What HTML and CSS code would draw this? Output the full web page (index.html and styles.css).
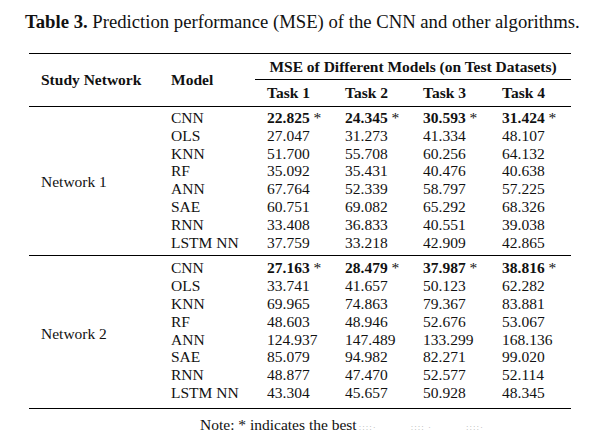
FILE: index.html
```html
<!DOCTYPE html>
<html>
<head>
<meta charset="utf-8">
<link rel="stylesheet" href="styles.css">
</head>
<body>
<div class="page">
  <p class="caption"><b>Table 3.</b> Prediction performance (MSE) of the CNN and other algorithms.</p>
  <table class="mse">
    <colgroup>
      <col class="c-net"><col class="c-model"><col class="c-task"><col class="c-task"><col class="c-task3"><col class="c-task4">
    </colgroup>
    <thead>
      <tr class="h1">
        <th rowspan="2" class="hl">Study Network</th>
        <th rowspan="2" class="hl">Model</th>
        <th colspan="4" class="span">MSE of Different Models (on Test Datasets)</th>
      </tr>
      <tr class="h2">
        <th>Task 1</th><th>Task 2</th><th>Task 3</th><th>Task 4</th>
      </tr>
    </thead>
    <tbody class="blk b1">
      <tr class="first"><td rowspan="8" class="net">Network 1</td><td>CNN</td><td><b>22.825</b> *</td><td><b>24.345</b> *</td><td><b>30.593</b> *</td><td><b>31.424</b> *</td></tr>
      <tr><td>OLS</td><td>27.047</td><td>31.273</td><td>41.334</td><td>48.107</td></tr>
      <tr><td>KNN</td><td>51.700</td><td>55.708</td><td>60.256</td><td>64.132</td></tr>
      <tr><td>RF</td><td>35.092</td><td>35.431</td><td>40.476</td><td>40.638</td></tr>
      <tr><td>ANN</td><td>67.764</td><td>52.339</td><td>58.797</td><td>57.225</td></tr>
      <tr><td>SAE</td><td>60.751</td><td>69.082</td><td>65.292</td><td>68.326</td></tr>
      <tr><td>RNN</td><td>33.408</td><td>36.833</td><td>40.551</td><td>39.038</td></tr>
      <tr class="last"><td>LSTM NN</td><td>37.759</td><td>33.218</td><td>42.909</td><td>42.865</td></tr>
    </tbody>
    <tbody class="blk b2">
      <tr class="first"><td rowspan="8" class="net">Network 2</td><td>CNN</td><td><b>27.163</b> *</td><td><b>28.479</b> *</td><td><b>37.987</b> *</td><td><b>38.816</b> *</td></tr>
      <tr><td>OLS</td><td>33.741</td><td>41.657</td><td>50.123</td><td>62.282</td></tr>
      <tr><td>KNN</td><td>69.965</td><td>74.863</td><td>79.367</td><td>83.881</td></tr>
      <tr><td>RF</td><td>48.603</td><td>48.946</td><td>52.676</td><td>53.067</td></tr>
      <tr><td>ANN</td><td>124.937</td><td>147.489</td><td>133.299</td><td>168.136</td></tr>
      <tr><td>SAE</td><td>85.079</td><td>94.982</td><td>82.271</td><td>99.020</td></tr>
      <tr><td>RNN</td><td>48.877</td><td>47.470</td><td>52.577</td><td>52.114</td></tr>
      <tr class="last"><td>LSTM NN</td><td>43.304</td><td>45.657</td><td>50.928</td><td>48.345</td></tr>
    </tbody>
  </table>
  <p class="note">Note: * indicates the best<span class="ghost g1">:ːːː·</span><span class="ghost g2">:ːːː ·</span><span class="ghost g3">ːːːː·</span></p>
</div>
</body>
</html>
```

FILE: styles.css
```css
html, body {
  margin: 0;
  padding: 0;
  background: #fff;
}
.page {
  width: 616px;
  height: 433px;
  overflow: hidden;
  font-family: "Liberation Serif", "DejaVu Serif", serif;
  color: #111;
}
.caption {
  margin: 0;
  padding: 11px 0 0 25px;
  font-size: 18.7px;
  line-height: 22px;
  white-space: nowrap;
}
.mse {
  margin: 20px 0 0 29px;
  width: 542px;
  table-layout: fixed;
  border-collapse: collapse;
  font-size: 15.5px;
}
.c-net { width: 130px; }
.c-model { width: 96px; }
.c-task { width: 78px; }
.c-task3 { width: 79px; }
.c-task4 { width: 81px; }
.mse th, .mse td {
  padding: 0 0 0 12px;
  text-align: left;
  white-space: nowrap;
}
.mse thead {
  border-top: 1px solid #000;
  border-bottom: 1px solid #000;
}
.mse th { font-weight: bold; }
.h1 th { height: 25px; }
.h2 th { height: 26px; }
.mse th.span {
  text-align: center;
  padding-left: 0;
  border-bottom: 1px solid #000;
}
.mse tbody td { line-height: 17.8px; }
.mse td.net { vertical-align: middle; }
.mse tbody { border-bottom: 1px solid #000; }
.b1 tr.first td { padding-top: 2px; }
.b1 tr.last td { padding-bottom: 4px; }
.b2 td { line-height: 17.6px; }
.b2 tr.first td { padding-top: 3px; }
.b2 tr.last td { padding-bottom: 6px; }
.mse td.net { padding-top: 0; padding-bottom: 0; }
.note {
  margin: 0;
  padding: 7px 0 0 200px;
  font-size: 15.5px;
  line-height: 18px;
  white-space: nowrap;
}
.ghost {
  color: #b8b8b8;
  font-size: 9px;
  letter-spacing: 1px;
}
.g1 { margin-left: 2px; }
.g2 { margin-left: 34px; }
.g3 { margin-left: 34px; }
```
